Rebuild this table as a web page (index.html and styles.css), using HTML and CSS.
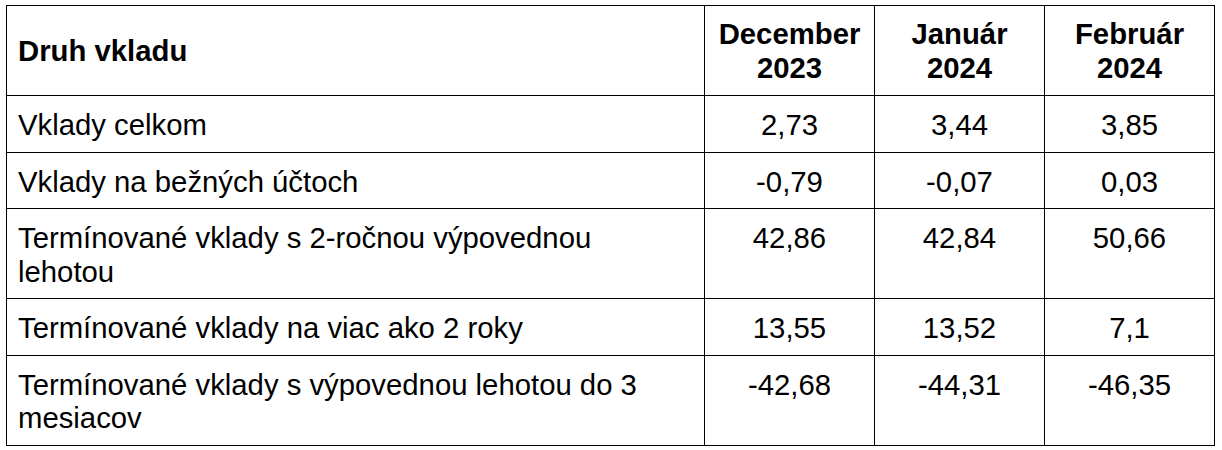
FILE: index.html
```html
<!DOCTYPE html>
<html lang="sk">
<head>
<meta charset="utf-8">
<title>Druh vkladu</title>
<link rel="stylesheet" href="styles.css">
</head>
<body>
<table class="deposits">
  <colgroup>
    <col class="col-name">
    <col class="col-val">
    <col class="col-val">
    <col class="col-val">
  </colgroup>
  <thead>
    <tr>
      <th class="name-head">Druh vkladu</th>
      <th class="val-head">December<br>2023</th>
      <th class="val-head">Január<br>2024</th>
      <th class="val-head">Február<br>2024</th>
    </tr>
  </thead>
  <tbody>
    <tr>
      <td class="name">Vklady celkom</td>
      <td class="val">2,73</td>
      <td class="val">3,44</td>
      <td class="val">3,85</td>
    </tr>
    <tr>
      <td class="name">Vklady na bežných účtoch</td>
      <td class="val">-0,79</td>
      <td class="val">-0,07</td>
      <td class="val">0,03</td>
    </tr>
    <tr>
      <td class="name">Termínované vklady s 2-ročnou výpovednou<br>lehotou</td>
      <td class="val">42,86</td>
      <td class="val">42,84</td>
      <td class="val">50,66</td>
    </tr>
    <tr>
      <td class="name">Termínované vklady na viac ako 2 roky</td>
      <td class="val">13,55</td>
      <td class="val">13,52</td>
      <td class="val">7,1</td>
    </tr>
    <tr>
      <td class="name">Termínované vklady s výpovednou lehotou do 3<br>mesiacov</td>
      <td class="val">-42,68</td>
      <td class="val">-44,31</td>
      <td class="val">-46,35</td>
    </tr>
  </tbody>
</table>
</body>
</html>
```
FILE: styles.css
```css
html, body {
  margin: 0;
  padding: 0;
  background: #ffffff;
}

body {
  padding: 5px 0 0 6px;
  font-family: "Liberation Sans", Arial, sans-serif;
  color: #000000;
}

.deposits {
  border-collapse: collapse;
  table-layout: fixed;
  width: 1209px;
  font-size: 29.3px;
  line-height: 33.5px;
}

.col-name { width: 698px; }
.col-val { width: 170px; }

.deposits th,
.deposits td {
  border: 1px solid #000000;
  padding: 12px 11px 10px 11px;
  vertical-align: top;
}

.deposits th {
  font-weight: bold;
  vertical-align: middle;
  padding-top: 11px;
  padding-bottom: 11px;
}

.name-head {
  text-align: left;
}

.val-head {
  text-align: center;
}

.name {
  text-align: left;
}

.val {
  text-align: center;
}
```
